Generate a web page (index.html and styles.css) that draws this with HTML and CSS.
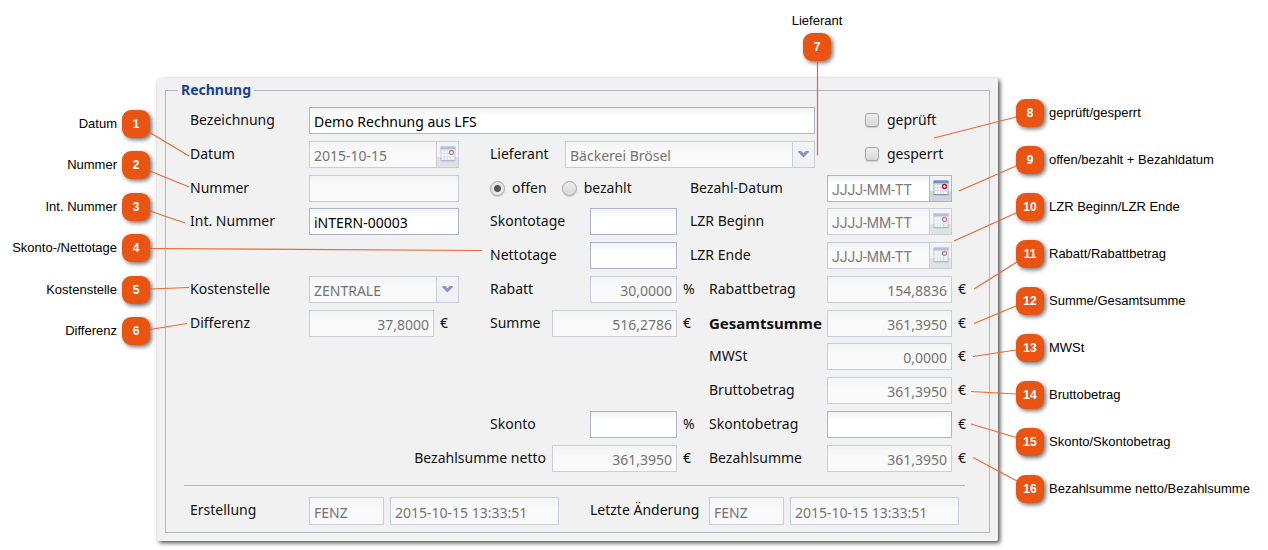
FILE: index.html
```html
<!DOCTYPE html>
<html lang="de">
<head>
<meta charset="utf-8">
<title>Rechnung</title>
<link rel="stylesheet" href="styles.css">
</head>
<body>
<svg class="defs" width="0" height="0" aria-hidden="true">
  <symbol id="calendar" viewBox="0 0 16 16">
    <rect x="1" y="1" width="14" height="14" fill="#fff" stroke="#8fa9d4" stroke-width="1"/>
    <path d="M.5 .5h15v3h-15z" fill="#6f90c3"/>
    <path d="M1.500 4.500h13M1.500 7.500h13M1.500 10.500h13M4.500 4v10M7.500 4v10M10.500 4v10" stroke="#d5dae4" fill="none"/>
    <path d="M.5 14.500h15" stroke="#8098c4"/>
    <circle cx="11.500" cy="6.500" r="2" fill="#fff" stroke="#a8131d" stroke-width="1.300"/>
  </symbol>
  <symbol id="chevron" viewBox="0 0 12 8">
    <path d="M0 0h3.500L6 2.500 8.500 0H12v1.500L6 7.500 0 1.500z" fill="#8796bd"/>
  </symbol>
</svg>
<main class="figure">
  <div class="callout callout-top"><span>Lieferant</span><b class="badge">7</b></div>

  <div class="callouts callouts-left">
    <div class="callout"><span>Datum</span><b class="badge">1</b></div>
    <div class="callout"><span>Nummer</span><b class="badge">2</b></div>
    <div class="callout"><span>Int. Nummer</span><b class="badge">3</b></div>
    <div class="callout"><span>Skonto-/Nettotage</span><b class="badge">4</b></div>
    <div class="callout"><span>Kostenstelle</span><b class="badge">5</b></div>
    <div class="callout"><span>Differenz</span><b class="badge">6</b></div>
  </div>

  <form class="panel">
    <fieldset class="group">
      <legend>Rechnung</legend>
      <div class="fields">
        <label class="r1 c-a" for="bez">Bezeichnung</label>
        <div class="r1 c-wide"><input class="field grow" id="bez" value="Demo Rechnung aus LFS"></div>
        <label class="r1 c-value tick"><input type="checkbox">geprüft</label>

        <label class="r2 c-a" for="datum">Datum</label>
        <div class="r2 c-b"><span class="combo off w150"><input id="datum" value="2015-10-15" disabled><button type="button" aria-label="Kalender" disabled><svg class="cal"><use href="#calendar"/></svg></button></span></div>
        <div class="r2 c-supplier"><label class="w75" for="lief">Lieferant</label><span class="combo off grow"><select id="lief" disabled><option>Bäckerei Brösel</option></select><span class="arrow"><svg class="chev"><use href="#chevron"/></svg></span></span></div>
        <label class="r2 c-value tick"><input type="checkbox">gesperrt</label>

        <label class="r3 c-a" for="nr">Nummer</label>
        <div class="r3 c-b"><input class="field w150" id="nr" disabled></div>
        <div class="r3 c-c radios"><label><input type="radio" name="status" checked>offen</label><label><input type="radio" name="status">bezahlt</label></div>
        <label class="r3 c-date" for="bd">Bezahl-Datum</label>
        <div class="r3 c-value"><span class="combo w125"><input id="bd" placeholder="JJJJ-MM-TT"><button type="button" aria-label="Kalender"><svg class="cal"><use href="#calendar"/></svg></button></span></div>

        <label class="r4 c-a" for="intnr">Int. Nummer</label>
        <div class="r4 c-b"><input class="field w150" id="intnr" value="iNTERN-00003"></div>
        <div class="r4 c-c"><label class="w100" for="st">Skontotage</label><input class="field w87" id="st"></div>
        <label class="r4 c-date" for="lb">LZR Beginn</label>
        <div class="r4 c-value"><span class="combo off w125"><input id="lb" placeholder="JJJJ-MM-TT" disabled><button type="button" aria-label="Kalender" disabled><svg class="cal"><use href="#calendar"/></svg></button></span></div>

        <div class="r5 c-c"><label class="w100" for="nt">Nettotage</label><input class="field w87" id="nt"></div>
        <label class="r5 c-date" for="le">LZR Ende</label>
        <div class="r5 c-value"><span class="combo off w125"><input id="le" placeholder="JJJJ-MM-TT" disabled><button type="button" aria-label="Kalender" disabled><svg class="cal"><use href="#calendar"/></svg></button></span></div>

        <label class="r6 c-a" for="ks">Kostenstelle</label>
        <div class="r6 c-b"><span class="combo off w150"><select id="ks" disabled><option>ZENTRALE</option></select><span class="arrow"><svg class="chev"><use href="#chevron"/></svg></span></span></div>
        <div class="r6 c-pair"><label class="grow" for="rab">Rabatt</label><input class="field num w87" id="rab" value="30,0000" disabled><span class="unit">%</span></div>
        <label class="r6 c-sum" for="rb">Rabattbetrag</label>
        <div class="r6 c-value"><input class="field num w125" id="rb" value="154,8836" disabled><span class="unit">€</span></div>

        <label class="r7 c-a" for="diff">Differenz</label>
        <div class="r7 c-b"><input class="field num w125" id="diff" value="37,8000" disabled><span class="unit">€</span></div>
        <div class="r7 c-pair"><label class="grow" for="sum">Summe</label><input class="field num w125" id="sum" value="516,2786" disabled><span class="unit">€</span></div>
        <label class="r7 c-sum total" for="gs">Gesamtsumme</label>
        <div class="r7 c-value"><input class="field num w125" id="gs" value="361,3950" disabled><span class="unit">€</span></div>

        <label class="r8 c-sum" for="mw">MWSt</label>
        <div class="r8 c-value"><input class="field num w125" id="mw" value="0,0000" disabled><span class="unit">€</span></div>

        <label class="r9 c-sum" for="bb">Bruttobetrag</label>
        <div class="r9 c-value"><input class="field num w125" id="bb" value="361,3950" disabled><span class="unit">€</span></div>

        <div class="r10 c-pair"><label class="grow" for="sk">Skonto</label><input class="field num w87" id="sk"><span class="unit">%</span></div>
        <label class="r10 c-sum" for="sb">Skontobetrag</label>
        <div class="r10 c-value"><input class="field num w125" id="sb"><span class="unit">€</span></div>

        <div class="r11 c-net"><label for="bn">Bezahlsumme netto</label><input class="field num w125" id="bn" value="361,3950" disabled><span class="unit">€</span></div>
        <label class="r11 c-sum" for="bs">Bezahlsumme</label>
        <div class="r11 c-value"><input class="field num w125" id="bs" value="361,3950" disabled><span class="unit">€</span></div>
      </div>

      <div class="history">
        <div class="entry"><label for="eu">Erstellung</label><input class="field w75" id="eu" value="FENZ" disabled><input class="field stamp" aria-label="Erstellt am" value="2015-10-15 13:33:51" disabled></div>
        <div class="entry"><label for="au">Letzte Änderung</label><input class="field w75" id="au" value="FENZ" disabled><input class="field stamp" aria-label="Geändert am" value="2015-10-15 13:33:51" disabled></div>
      </div>
    </fieldset>
  </form>

  <div class="callouts callouts-right">
    <div class="callout"><b class="badge">8</b><span>geprüft/gesperrt</span></div>
    <div class="callout"><b class="badge">9</b><span>offen/bezahlt + Bezahldatum</span></div>
    <div class="callout"><b class="badge">10</b><span>LZR Beginn/LZR Ende</span></div>
    <div class="callout"><b class="badge">11</b><span>Rabatt/Rabattbetrag</span></div>
    <div class="callout"><b class="badge">12</b><span>Summe/Gesamtsumme</span></div>
    <div class="callout"><b class="badge">13</b><span>MWSt</span></div>
    <div class="callout"><b class="badge">14</b><span>Bruttobetrag</span></div>
    <div class="callout"><b class="badge">15</b><span>Skonto/Skontobetrag</span></div>
    <div class="callout"><b class="badge">16</b><span>Bezahlsumme netto/Bezahlsumme</span></div>
  </div>

  <svg class="leaders" viewBox="0 0 1268 549" preserveAspectRatio="none" aria-hidden="true">
    <path d="M149 132L189 156M150 171L189 187M150 211L185 223M150 248.500L482 250.500M150 289L189 287.500M150 329.500L187 323.500M817.500 61V155.500M1016 117L934 138M1016 166L959 191M1016 213L954 241M1017 262L974 289M1016 306L974 323.500M1016 350L973 356.500M1016 394L971 391.500M1016 437.500L971 424M1017 481L973 457.500"/>
  </svg>
</main>
</body>
</html>
```
FILE: styles.css
```css
* { box-sizing: border-box; }

body {
  margin: 0;
  background: #fff;
  color: #111;
  font-family: "Noto Sans", Tahoma, sans-serif;
  font-size: 14px;
}

.defs { position: absolute; }

.figure {
  position: relative;
  display: grid;
  grid-template-columns: 157px minmax(841px, 1fr) 270px;
  grid-template-rows: 78px auto;
}

/* numbered callouts */
.callout {
  display: flex;
  align-items: center;
  gap: 5px;
  font: 13px/28px "Liberation Sans", Arial, sans-serif;
  color: #000;
  white-space: nowrap;
}

.badge {
  flex: none;
  width: 28px;
  height: 28px;
  border-radius: 9px;
  background: #e95412;
  box-shadow: 2px 2px 4px rgba(0, 0, 0, .55);
  color: #fff;
  font-size: 12px;
  text-align: center;
}

.callout-top {
  grid-column: 2;
  flex-direction: column;
  justify-content: flex-start;
  gap: 4px;
  width: 50px;
  margin: 12px 0 0 635px;
  line-height: 17px;
}

.callout-top .badge { line-height: 28px; }

.callouts {
  display: flex;
  flex-direction: column;
}

.callouts-left {
  grid-column: 1;
  justify-content: space-between;
  height: 235px;
  margin: 32px 7px 0 0;
}

.callouts-left .callout { justify-content: flex-end; }

.callouts-right {
  gap: 19px;
  padding: 21px 0 0 18px;
}

.leaders {
  position: absolute;
  inset: 0;
  width: 100%;
  height: 100%;
  fill: none;
  stroke: #ea6a32;
  stroke-width: 1.200;
  pointer-events: none;
}

/* form panel */
.panel {
  margin-bottom: 8px;
  padding: 2px 8px 8px;
  border-radius: 4px 2px 2px 2px;
  background: #f1f1f1;
  box-shadow: 2px 2px 4px rgba(0, 0, 0, .7);
}

.group {
  min-width: 0;
  margin: 0;
  padding: 7px 24px 7px 12px;
  border: 1px solid #b2b6cc;
}

.group legend {
  padding: 0 3px;
  color: #1b418e;
  font-weight: bold;
  line-height: 20px;
}

.fields {
  display: grid;
  grid-template-columns: 119px 181px 200px 19px 118px 1fr;
  grid-template-rows: 34px 34px 33px 34px 34px 34px 33px 34px 34px 34px 27px;
  align-items: start;
  margin-left: 12px;
}

.fields > div { display: flex; }

.panel label,
.unit {
  line-height: 26px;
  white-space: nowrap;
}

.unit {
  flex: none;
  width: 32px;
  padding-left: 6px;
}

.total {
  font-size: 15px;
  font-weight: bold;
}

.r1 { grid-row: 1; }
.r2 { grid-row: 2; }
.r3 { grid-row: 3; }
.r4 { grid-row: 4; }
.r5 { grid-row: 5; }
.r6 { grid-row: 6; }
.r7 { grid-row: 7; }
.r8 { grid-row: 8; }
.r9 { grid-row: 9; }
.r10 { grid-row: 10; }
.r11 { grid-row: 11; }

.c-a { grid-column: 1; }
.c-b { grid-column: 2; }
.c-c { grid-column: 3; }
.c-pair { grid-column: 3 / 5; }
.c-net { grid-column: 2 / 5; justify-content: flex-end; }
.c-net label { margin-right: 6px; }
.c-date { grid-column: 4 / 6; }
.c-sum { grid-column: 5; }
.c-value { grid-column: 6; }
.c-wide { grid-column: 2 / 6; padding-right: 12px; }
.c-supplier { grid-column: 3 / 6; padding-right: 12px; }

.w75 { width: 75px; }
.w87 { width: 87px; }
.w100 { width: 100px; }
.w125 { width: 125px; }
.w150 { width: 150px; }
.grow { flex: 1; }

.field,
.combo {
  height: 27px;
  border: 1px solid #b0b4cb;
  background: #fff linear-gradient(#eff3f4, #fff 9px);
}

.field,
.combo input,
.combo select {
  min-width: 0;
  margin: 0;
  padding: 2px 4px 0;
  border-radius: 0;
  color: #000;
  font: inherit;
}

.field:disabled,
.off {
  border-color: #cbceda;
  background: #f9f9f9 linear-gradient(#f2f4f4, #f9f9f9 9px);
}

.field:disabled,
.combo input:disabled,
.combo select:disabled {
  color: #747474;
  opacity: 1;
}

.num { text-align: right; }

.combo { display: flex; }

.combo input,
.combo select {
  flex: 1;
  width: 0;
  border: 0;
  background: none;
  appearance: none;
}

.combo input:placeholder-shown { font-family: Roboto, Tahoma, sans-serif; }

.combo input::placeholder { color: #7d7d7d; }

.combo button,
.arrow {
  display: flex;
  flex: none;
  justify-content: center;
  width: 22px;
  margin: 0;
  padding: 4px 0 0;
  border: 0;
  border-left: 1px solid #b0b4cb;
  background: linear-gradient(#f3f3f5 60%, #d3d4d8 60%);
}

.off button,
.off .arrow { border-left-color: #cbceda; }

.off button { background: linear-gradient(#f3f3f5 60%, #e0e1e3 60%); }

.arrow {
  padding-top: 9px;
  background: linear-gradient(#f3f4f6, #eff0f4);
}

.cal {
  width: 16px;
  height: 16px;
}

.off .cal { opacity: .5; }

.chev {
  width: 11px;
  height: 7px;
}

/* check boxes and radio buttons */
.tick,
.radios label {
  display: flex;
  align-items: center;
}

.tick {
  gap: 8px;
  margin-left: 38px;
}

.tick input,
.radios input {
  width: 14px;
  height: 14px;
  margin: 0;
  border: 1px solid #a6a6a6;
  border-radius: 3px;
  background: linear-gradient(#eee, #d8d8d8);
  box-shadow: 0 1px 1px rgba(0, 0, 0, .15);
  appearance: none;
}

.radios { gap: 15px; }

.radios label { gap: 7px; }

.radios input {
  width: 15px;
  height: 15px;
  border-radius: 50%;
}

.radios input:checked { background: radial-gradient(circle, #555 3px, #e6e6e6 4px); }

/* creation and change stamps */
.history {
  display: flex;
  gap: 31px;
  margin: 13px 0 0 6px;
  padding: 11px 0 0 6px;
  border-top: 1px solid #b2b6cc;
}

.entry {
  display: flex;
  gap: 6px;
}

.entry label { width: 113px; }

.entry .field { height: 28px; }

.stamp { width: 169px; }
```
